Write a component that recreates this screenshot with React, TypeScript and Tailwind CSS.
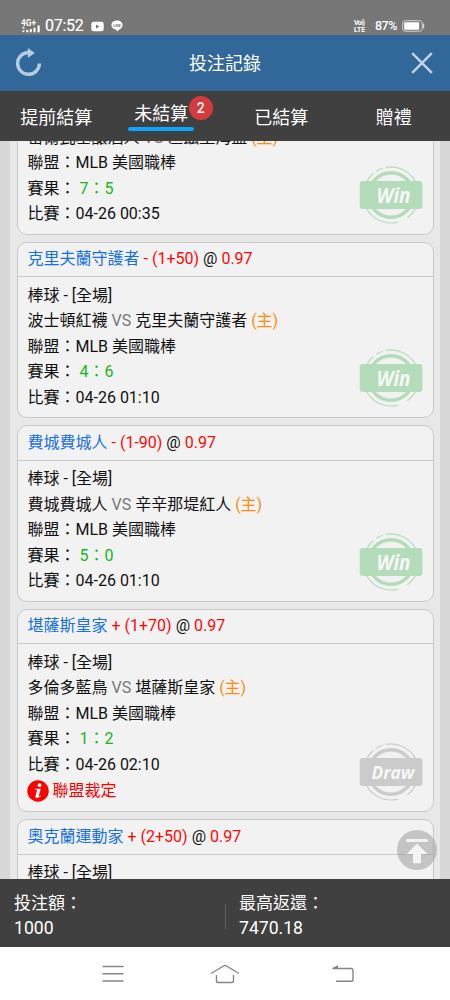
import React from "react";

type Bet = {
  pick?: string;
  line?: string;
  away?: string;
  home?: string;
  score?: [string, string];
  time?: string;
  note?: string;
  result?: "Win" | "Draw";
};

const bets: Bet[] = [
  { away: "密爾瓦基釀酒人", home: "匹茲堡海盜", score: ["7", "5"], time: "04-26 00:35", result: "Win" },
  { pick: "克里夫蘭守護者", line: "- (1+50)", away: "波士頓紅襪", home: "克里夫蘭守護者", score: ["4", "6"], time: "04-26 01:10", result: "Win" },
  { pick: "費城費城人", line: "- (1-90)", away: "費城費城人", home: "辛辛那堤紅人", score: ["5", "0"], time: "04-26 01:10", result: "Win" },
  { pick: "堪薩斯皇家", line: "+ (1+70)", away: "多倫多藍鳥", home: "堪薩斯皇家", score: ["1", "2"], time: "04-26 02:10", note: "聯盟裁定", result: "Draw" },
  { pick: "奧克蘭運動家", line: "+ (2+50)" },
];

function Stamp({ result }: { result: "Win" | "Draw" }) {
  const win = result === "Win";
  const color = win ? "#b4dcbb" : "#cbcbcb";
  return (
    <svg className="absolute right-[10px] bottom-[10px]" width="64" height="58" viewBox="0 0 64 58" fill="none">
      <circle cx="32" cy="29" r="22.3" stroke={color} strokeWidth="3.4" />
      <path d="M27 1.400A28 28 0 0 1 56.500 15.500" stroke={color} strokeWidth="1.200" />
      <path d="M17.200 5.200A28 28 0 0 1 23.700 2.300M8 15.500A28 28 0 0 1 14.200 7.500" stroke={color} strokeWidth="1.200" />
      <path d="M7.500 42.500A28 28 0 0 0 39 56.100M48.500 51.700A28 28 0 0 0 56.500 42.500" stroke={color} strokeWidth="1.200" />
      <rect x="0.7" y="15" width="62.7" height="28" rx="3.2" fill={color} />
      <text
        x={win ? 17.5 : 12.5}
        y={win ? 36.5 : 35.5}
        textLength={win ? 34 : 43}
        lengthAdjust="spacingAndGlyphs"
        fill="#f7f7f7"
        className={win ? "font-['Open_Sans'] text-[21px] font-bold italic" : "font-['Open_Sans'] text-[18.5px] font-bold italic"}
      >
        {result}
      </text>
    </svg>
  );
}

function BetCard({ bet }: { bet: Bet }) {
  return (
    <section className="relative shrink-0 rounded-[10px] border border-[#c8c8c8] bg-[#f2f2f2]">
      {bet.pick && (
        <h2 className="flex h-[34.5px] items-center gap-1 border-b border-[#c8c8c8] px-2.5 whitespace-nowrap">
          <span className="text-[#1670e8]">{bet.pick}</span>
          <span className="text-[#ff0808]">{bet.line}</span>
          <span>@</span>
          <span className="text-[#ff0808]">0.97</span>
        </h2>
      )}
      <div className="px-2.5 pt-[5.8px] pb-[7.2px] leading-[25.4px] whitespace-nowrap">
        {bet.pick && <p>棒球 - [全場]</p>}
        {bet.away && (
          <>
            <p>
              {bet.away} <span className="text-[#777777]">VS</span> {bet.home}{" "}
              <span className="text-[#ff8c0a]">(主)</span>
            </p>
            <p>聯盟：MLB 美國職棒</p>
            <p>
              賽果： <span className="text-[#18b818]">{bet.score?.[0]}：{bet.score?.[1]}</span>
            </p>
            <p>比賽：{bet.time}</p>
          </>
        )}
        {bet.note && (
          <p className="flex h-[27px] items-center gap-[3px] pt-px text-[#ff0000]">
            <svg className="-ml-px" width="22" height="22" viewBox="0 0 22 22">
              <circle cx="11" cy="11" r="10.7" fill="#ff0000" />
              <circle cx="12.5" cy="5.2" r="1.9" fill="#fff" />
              <path d="M8 8.7h5.8l-2 7.2c-.2.8.6.5 1.8-.5l.4.5c-2.4 2.5-6.2 2.8-5.500 0l1.500-5.600c.2-.7-.8-.8-2-.8z" fill="#fff" />
            </svg>
            <span className="ml-px">{bet.note}</span>
          </p>
        )}
      </div>
      {bet.result && <Stamp result={bet.result} />}
    </section>
  );
}

function StatusBar() {
  return (
    <div className="flex h-[35px] shrink-0 items-start justify-between bg-[#777777] pt-[16px] pr-[25px] pl-[20px] text-white">
      <div className="flex items-center">
        <svg width="22" height="18" viewBox="0 0 22 18" fill="#fff">
          <text x="1" y="8.500" className="font-[Roboto] text-[9px] font-bold" textLength="15" lengthAdjust="spacingAndGlyphs">4G+</text>
          <path d="M1.800 11.500l1.600-2 1.600 2zM1.800 13.500l1.600 2 1.600-2zM6.300 13h2v2.300h-2zM9.800 12h2v3.300h-2zM13.500 10.700h2v4.600h-2zM17.500 8.500h2.200v6.800h-2.200z" />
        </svg>
        <span className="ml-[3px] w-[37px] text-[16px] leading-[20px] tracking-[-0.3px] [-webkit-text-stroke:0.2px_white]">07:52</span>
        <svg className="ml-[9px]" width="13" height="11" viewBox="0 0 13 11">
          <rect x=".3" y=".7" width="12.400" height="9.500" rx="2.200" fill="#fff" />
          <path d="M5 3.400v4l3.400-2z" fill="#777" />
        </svg>
        <svg className="ml-[7px]" width="12" height="12" viewBox="0 0 12 12">
          <path d="M6 .5c3.200 0 5.600 2 5.600 4.600C11.600 7.800 8 10.300 6 11.400c-.5.2-.3-.8-.5-1.600C2.500 9.600.4 7.700.4 5.100.4 2.500 2.800.5 6 .5z" fill="#fff" />
          <text x="2.200" y="6.500" textLength="7.600" lengthAdjust="spacingAndGlyphs" fill="#777" className="font-[Roboto] text-[3.5px] font-bold">LINE</text>
        </svg>
      </div>
      <div className="flex items-center pt-[1px]">
        <svg width="14" height="18" viewBox="-2 0 14 18" fill="#fff" className="font-[Roboto] text-[7px] font-bold">
          <text x="0" y="8" textLength="11">Voi)</text>
          <text x="0" y="15" textLength="11" lengthAdjust="spacingAndGlyphs">LTE</text>
        </svg>
        <span className="ml-[9px] w-[23px] text-[12.5px] leading-[18px] font-medium tracking-[-0.5px]">87%</span>
        <svg className="ml-[4px]" width="23" height="12" viewBox="0 0 23 12" fill="none">
          <rect x=".7" y=".7" width="19.500" height="10.500" rx="2.500" stroke="#d2d2d2" />
          <rect x="2.200" y="2.200" width="15" height="7.500" rx="1" fill="#fff" />
          <path d="M21.500 3.500v5" stroke="#d2d2d2" strokeWidth="1.500" />
        </svg>
      </div>
    </div>
  );
}

export default function App() {
  return (
    <div className="flex h-[1000px] w-[450px] flex-col overflow-hidden bg-[#e8e8e8] font-[Roboto,'Noto_Sans_CJK_TC',sans-serif] text-[16px] text-[#111111]">
      <StatusBar />
      <header className="flex h-[56px] shrink-0 items-center justify-between bg-[#316799] pr-[17px] pl-[15px] text-white">
        <svg width="27" height="30" viewBox="0 0 27 30" fill="none">
          <path d="M13.500 4.500A10.900 10.900 0 1 0 24.400 15.500" stroke="#b5cbdf" strokeWidth="3.400" />
          <path d="M12.800 0l7 5-7 5z" fill="#b5cbdf" />
        </svg>
        <h1 className="mr-[3px] text-[18px]">投注記錄</h1>
        <svg width="22" height="22" viewBox="0 0 22 22" stroke="#c3d3e2" strokeWidth="2.500">
          <path d="M1.200 1.200L20.800 20.800M20.800 1.200L1.200 20.800" />
        </svg>
      </header>
      <nav className="grid h-[50px] shrink-0 grid-cols-4 bg-[#404040] text-[18px] text-white">
        <div className="flex items-center justify-center pt-[2px]">提前結算</div>
        <div className="flex justify-center">
          <div className="relative mt-[5px] ml-[-16px] flex h-[35px] w-[66px] flex-col items-center justify-end leading-none">
            <span className="h-[22px] pl-px">未結算</span>
            <span className="h-[4px] w-full shrink-0 rounded-full bg-[#08a8ff]" />
            <span className="absolute top-[0px] left-[61px] flex size-[24px] items-center justify-center rounded-full bg-[#d63a3e] text-[14px] font-medium">2</span>
          </div>
        </div>
        <div className="flex items-center justify-center pt-[2px]">已結算</div>
        <div className="flex items-center justify-center pt-[2px]">贈禮</div>
      </nav>
      <div className="relative flex min-h-0 flex-1 overflow-hidden border-x-[10px] border-[#d7d7d7] bg-[#e8e8e8]">
        <main className="flex flex-1 flex-col px-[6.5px]">
          <div className="mt-[-23px] flex flex-col gap-[7px]">
            {bets.map((bet, i) => <BetCard key={i} bet={bet} />)}
          </div>
        </main>
        <button aria-label="回到頂部" className="absolute right-[3px] bottom-[9px] size-[40px] rounded-full bg-[#a5a5a5]/60">
          <svg width="40" height="40" viewBox="0 0 40 40" fill="#f4f4f4">
            <rect x="9" y="9" width="22" height="3" rx="1.500" />
            <path d="M20 13.500L30.500 24H24v8.500q0 .7-.7.7h-6.600q-.7 0-.7-.7V24H9.500z" />
          </svg>
        </button>
      </div>
      <footer className="grid h-[68px] shrink-0 grid-cols-2 bg-[#404040] pt-[12px] pb-[6px] text-[17px] leading-[25px] text-white">
        <div className="relative pl-[14px]">
          <p>投注額：</p>
          <p className="text-[17.6px]">1000</p>
          <span className="absolute top-[13px] right-[-1px] h-[25px] w-px bg-[#606060]" />
        </div>
        <div className="pl-[14px]">
          <p>最高返還：</p>
          <p className="text-[17.6px]">7470.18</p>
        </div>
      </footer>
      <div className="flex h-[53px] shrink-0 items-center gap-[86px] bg-white pl-[102px]">
        <svg width="22" height="20" viewBox="0 0 22 20" stroke="#858585" strokeWidth="1.400">
          <path d="M.5 2.500h21M.5 9.800h21M.5 17h21" />
        </svg>
        <svg width="30" height="20" viewBox="0 0 30 20" fill="none" stroke="#858585" strokeWidth="1.400" strokeLinejoin="round">
          <path d="M1 9.500L13.500 2q1.500-1 3 0L29 9.500M6.500 11v6q0 1.500 1.500 1.500h14q1.500 0 1.500-1.500v-6" />
        </svg>
        <svg width="24" height="20" viewBox="0 0 24 20" fill="none" stroke="#858585" strokeWidth="1.400" strokeLinejoin="round" className="ml-[5px]">
          <path d="M7 2.200L2 4.500h18q2 0 2 2v9q0 1.800-2 1.800H5" />
          <path d="M2 4.500l5-3v3z" fill="#858585" stroke="none" />
        </svg>
      </div>
    </div>
  );
}
